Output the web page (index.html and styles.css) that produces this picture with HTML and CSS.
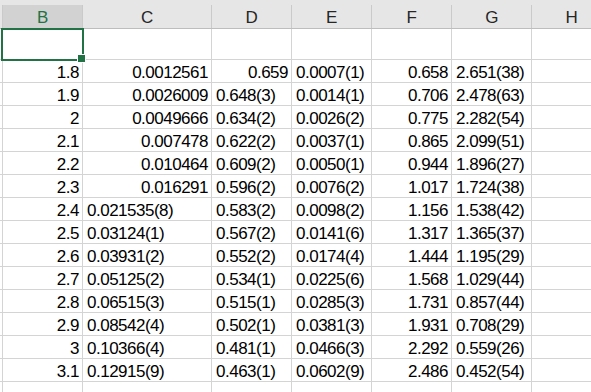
FILE: index.html
```html
<!DOCTYPE html>
<html lang="en">
<head>
    <meta charset="UTF-8">
    <meta name="viewport" content="width=device-width, initial-scale=1.0">
    <title>Sheet1</title>
    <link rel="stylesheet" href="styles.css">
</head>
<body>
    <div class="sheet">
        <div class="row heads">
            <div class="h corner"></div>
            <div class="h active">B</div>
            <div class="h">C</div>
            <div class="h">D</div>
            <div class="h">E</div>
            <div class="h">F</div>
            <div class="h">G</div>
            <div class="h">H</div>
        </div>

        <div class="row tall">
            <div class="c edge"></div>
            <div class="c selected"></div>
            <div class="c"></div><div class="c"></div><div class="c"></div>
            <div class="c"></div><div class="c"></div><div class="c"></div>
        </div>

        <div class="row">
            <div class="c edge"></div>
            <div class="c num">1.8</div>
            <div class="c num">0.0012561</div>
            <div class="c num">0.659</div>
            <div class="c">0.0007(1)</div>
            <div class="c num">0.658</div>
            <div class="c">2.651(38)</div>
            <div class="c"></div>
        </div>
        <div class="row">
            <div class="c edge"></div>
            <div class="c num">1.9</div>
            <div class="c num">0.0026009</div>
            <div class="c">0.648(3)</div>
            <div class="c">0.0014(1)</div>
            <div class="c num">0.706</div>
            <div class="c">2.478(63)</div>
            <div class="c"></div>
        </div>
        <div class="row">
            <div class="c edge"></div>
            <div class="c num">2</div>
            <div class="c num">0.0049666</div>
            <div class="c">0.634(2)</div>
            <div class="c">0.0026(2)</div>
            <div class="c num">0.775</div>
            <div class="c">2.282(54)</div>
            <div class="c"></div>
        </div>
        <div class="row">
            <div class="c edge"></div>
            <div class="c num">2.1</div>
            <div class="c num">0.007478</div>
            <div class="c">0.622(2)</div>
            <div class="c">0.0037(1)</div>
            <div class="c num">0.865</div>
            <div class="c">2.099(51)</div>
            <div class="c"></div>
        </div>
        <div class="row">
            <div class="c edge"></div>
            <div class="c num">2.2</div>
            <div class="c num">0.010464</div>
            <div class="c">0.609(2)</div>
            <div class="c">0.0050(1)</div>
            <div class="c num">0.944</div>
            <div class="c">1.896(27)</div>
            <div class="c"></div>
        </div>
        <div class="row">
            <div class="c edge"></div>
            <div class="c num">2.3</div>
            <div class="c num">0.016291</div>
            <div class="c">0.596(2)</div>
            <div class="c">0.0076(2)</div>
            <div class="c num">1.017</div>
            <div class="c">1.724(38)</div>
            <div class="c"></div>
        </div>
        <div class="row">
            <div class="c edge"></div>
            <div class="c num">2.4</div>
            <div class="c">0.021535(8)</div>
            <div class="c">0.583(2)</div>
            <div class="c">0.0098(2)</div>
            <div class="c num">1.156</div>
            <div class="c">1.538(42)</div>
            <div class="c"></div>
        </div>
        <div class="row">
            <div class="c edge"></div>
            <div class="c num">2.5</div>
            <div class="c">0.03124(1)</div>
            <div class="c">0.567(2)</div>
            <div class="c">0.0141(6)</div>
            <div class="c num">1.317</div>
            <div class="c">1.365(37)</div>
            <div class="c"></div>
        </div>
        <div class="row">
            <div class="c edge"></div>
            <div class="c num">2.6</div>
            <div class="c">0.03931(2)</div>
            <div class="c">0.552(2)</div>
            <div class="c">0.0174(4)</div>
            <div class="c num">1.444</div>
            <div class="c">1.195(29)</div>
            <div class="c"></div>
        </div>
        <div class="row">
            <div class="c edge"></div>
            <div class="c num">2.7</div>
            <div class="c">0.05125(2)</div>
            <div class="c">0.534(1)</div>
            <div class="c">0.0225(6)</div>
            <div class="c num">1.568</div>
            <div class="c">1.029(44)</div>
            <div class="c"></div>
        </div>
        <div class="row">
            <div class="c edge"></div>
            <div class="c num">2.8</div>
            <div class="c">0.06515(3)</div>
            <div class="c">0.515(1)</div>
            <div class="c">0.0285(3)</div>
            <div class="c num">1.731</div>
            <div class="c">0.857(44)</div>
            <div class="c"></div>
        </div>
        <div class="row">
            <div class="c edge"></div>
            <div class="c num">2.9</div>
            <div class="c">0.08542(4)</div>
            <div class="c">0.502(1)</div>
            <div class="c">0.0381(3)</div>
            <div class="c num">1.931</div>
            <div class="c">0.708(29)</div>
            <div class="c"></div>
        </div>
        <div class="row">
            <div class="c edge"></div>
            <div class="c num">3</div>
            <div class="c">0.10366(4)</div>
            <div class="c">0.481(1)</div>
            <div class="c">0.0466(3)</div>
            <div class="c num">2.292</div>
            <div class="c">0.559(26)</div>
            <div class="c"></div>
        </div>
        <div class="row">
            <div class="c edge"></div>
            <div class="c num">3.1</div>
            <div class="c">0.12915(9)</div>
            <div class="c">0.463(1)</div>
            <div class="c">0.0602(9)</div>
            <div class="c num">2.486</div>
            <div class="c">0.452(54)</div>
            <div class="c"></div>
        </div>
        <div class="row">
            <div class="c edge"></div>
            <div class="c"></div><div class="c"></div><div class="c"></div><div class="c"></div>
            <div class="c"></div><div class="c"></div><div class="c"></div>
        </div>
    </div>
</body>
</html>
```

FILE: styles.css
```css
* {
    margin: 0;
    padding: 0;
    box-sizing: border-box;
}

html, body {
    overflow: hidden;
    background: #fff;
}

body {
    font-family: 'Liberation Sans', Arial, sans-serif;
    font-size: 17px;
    letter-spacing: -0.5px;
    color: #000;
}

.sheet {
    width: 612px;
}

.row {
    display: grid;
    grid-template-columns: 3px 80px 129px 80px 80px 80px 80px 80px;
    height: 23px;
}

.row.tall {
    height: 31px;
}

/* column letters */
.heads {
    height: 29px;
    padding-top: 5px;
    background: #e6e6e6;
    border-bottom: 1px solid #bdbdbd;
}

.h {
    height: 23px;
    padding-top: 4px;
    line-height: 18px;
    text-align: center;
    color: #262626;
    border-right: 1px solid #cacaca;
}

.h.active {
    background: #d2d2d2;
    color: #217346;
}

/* cells */
.c {
    padding: 4px 4px 0 4px;
    line-height: 18px;
    white-space: nowrap;
    border-right: 1px solid #d4d4d4;
    border-bottom: 1px solid #d4d4d4;
}

.tall .c {
    padding-top: 0;
}

.c.num {
    text-align: right;
    padding-right: 3px;
}

.c.edge {
    padding: 0;
}

.selected {
    position: relative;
}

.selected::after {
    content: "";
    position: absolute;
    left: -2px;
    right: -2px;
    top: -1px;
    bottom: -2px;
    border: 2px solid #217346;
}

.selected::before {
    content: "";
    position: absolute;
    right: -4px;
    bottom: -4px;
    width: 7px;
    height: 7px;
    background: #217346;
    border: 1px solid #fff;
    z-index: 1;
}
```
